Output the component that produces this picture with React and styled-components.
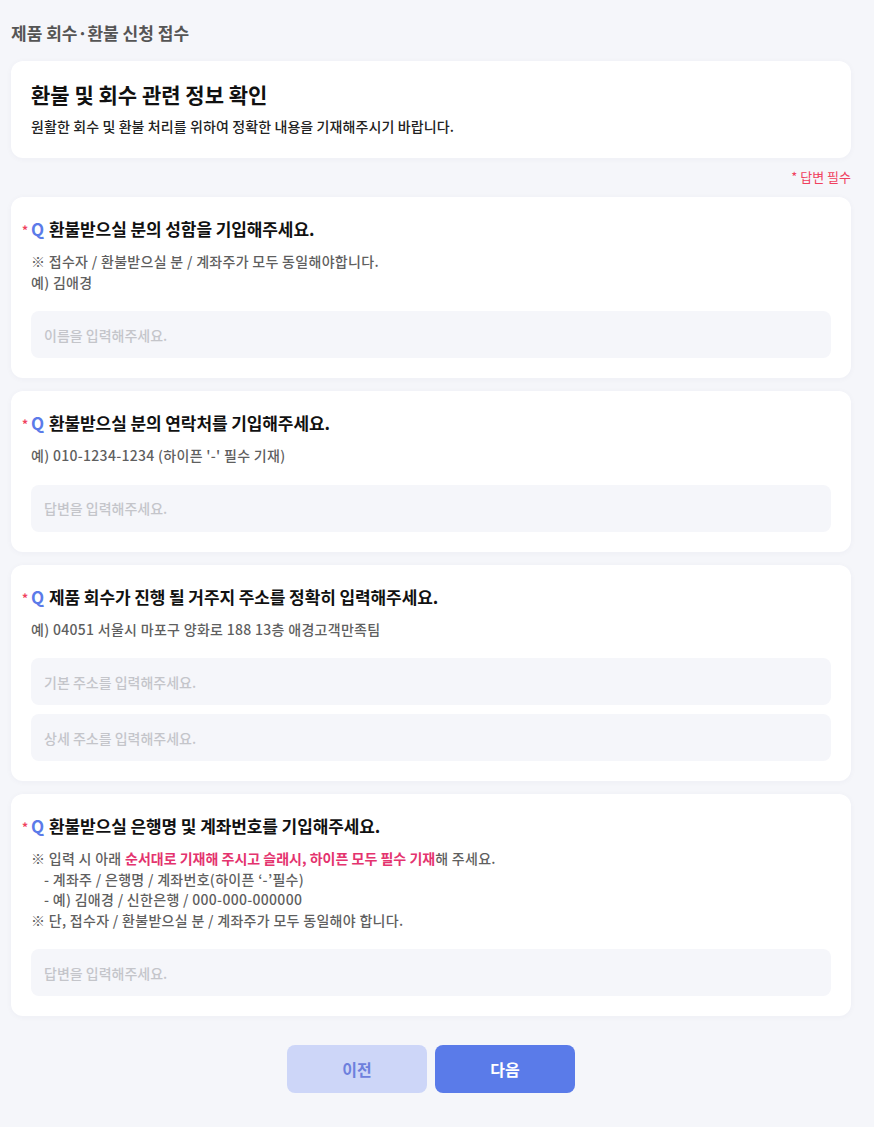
import React from "react";
import styled, { createGlobalStyle } from "styled-components";

const GlobalStyle = createGlobalStyle`
  * { box-sizing: border-box; }
  body {
    margin: 0;
    background: #f5f6fa;
    font-family: "Noto Sans CJK KR", "Noto Sans", sans-serif;
    color: #222;
  }
`;

const Page = styled.div`
  padding: 20px 23px 34px 11px;
  display: flex;
  flex-direction: column;
`;

const PageTitle = styled.h1`
  margin: 0 0 15px;
  font-size: 17px;
  line-height: 26px;
  font-weight: 700;
  color: #555;
`;

const Card = styled.section`
  background: #fff;
  border-radius: 12px;
  box-shadow: 0 1px 6px rgba(40, 50, 90, 0.04);
  padding: 20px 20px 20px 11px;
  display: flex;
  flex-direction: column;
`;

const IntroCard = styled(Card)`
  padding: 18px 20px 21px 20px;
`;

const IntroTitle = styled.h2`
  margin: 0 0 6px;
  font-size: 21px;
  line-height: 30px;
  font-weight: 700;
  color: #111;
`;

const IntroText = styled.p`
  margin: 0;
  font-size: 14px;
  line-height: 22px;
  font-weight: 500;
  color: #222;
  letter-spacing: 0.1px;
`;

const Required = styled.div`
  align-self: flex-end;
  margin: 9px 0 10px;
  font-size: 13px;
  line-height: 20px;
  color: #f0415e;
`;

const List = styled.div`
  display: flex;
  flex-direction: column;
  gap: 13px;
`;

const QTitle = styled.h3`
  margin: 0;
  display: flex;
  align-items: center;
  font-size: 17px;
  line-height: 22px;
  font-weight: 700;
  color: #111;
  letter-spacing: -0.1px;
`;

const Star = styled.span`
  color: #f0415e;
  font-size: 12px;
  width: 9px;
  margin-top: 2px;
`;

const Q = styled.span`
  color: #5b7be9;
  margin-right: 5px;
`;

const Desc = styled.div`
  margin: 10px 0 0 9px;
  font-size: 14px;
  line-height: 20.5px;
  font-weight: 500;
  color: #5f5f5f;
  letter-spacing: 0.3px;
`;

const Line = styled.div`
  padding-left: ${(p) => (p.$indent ? "13px" : "0")};
`;

const Mark = styled.span`
  color: #e4336e;
  font-weight: 700;
  letter-spacing: 0;
`;

const Inputs = styled.div`
  margin: 19px 0 0 9px;
  display: flex;
  flex-direction: column;
  gap: 9px;
`;

const Field = styled.input`
  height: 47px;
  width: 100%;
  border: none;
  outline: none;
  border-radius: 8px;
  background: #f5f6fa;
  padding: 0 13px;
  font-family: inherit;
  font-size: 14px;
  font-weight: 500;
  color: #222;
  &::placeholder {
    color: #c4c5ca;
  }
`;

const Buttons = styled.div`
  margin-top: 29px;
  display: flex;
  justify-content: center;
  gap: 8px;
`;

const Button = styled.button`
  width: 140px;
  height: 48px;
  border: none;
  border-radius: 8px;
  font-family: inherit;
  font-size: 16px;
  font-weight: 700;
  background: ${(p) => (p.$primary ? "#5a7be9" : "#cdd6f8")};
  color: ${(p) => (p.$primary ? "#fff" : "#6d80dd")};
  cursor: pointer;
`;

function Question({ title, children, fields }) {
  return (
    <Card>
      <QTitle>
        <Star>*</Star>
        <Q>Q</Q>
        {title}
      </QTitle>
      <Desc>{children}</Desc>
      <Inputs>
        {fields.map((f) => (
          <Field key={f} placeholder={f} />
        ))}
      </Inputs>
    </Card>
  );
}

export default function App() {
  return (
    <>
      <GlobalStyle />
      <Page>
        <PageTitle>제품 회수·환불 신청 접수</PageTitle>
        <IntroCard>
          <IntroTitle>환불 및 회수 관련 정보 확인</IntroTitle>
          <IntroText>원활한 회수 및 환불 처리를 위하여 정확한 내용을 기재해주시기 바랍니다.</IntroText>
        </IntroCard>
        <Required>* 답변 필수</Required>
        <List>
          <Question title="환불받으실 분의 성함을 기입해주세요." fields={["이름을 입력해주세요."]}>
            <Line>※ 접수자 / 환불받으실 분 / 계좌주가 모두 동일해야합니다.</Line>
            <Line>예) 김애경</Line>
          </Question>
          <Question title="환불받으실 분의 연락처를 기입해주세요." fields={["답변을 입력해주세요."]}>
            <Line>예) 010-1234-1234 (하이픈 '-' 필수 기재)</Line>
          </Question>
          <Question
            title="제품 회수가 진행 될 거주지 주소를 정확히 입력해주세요."
            fields={["기본 주소를 입력해주세요.", "상세 주소를 입력해주세요."]}
          >
            <Line>예) 04051 서울시 마포구 양화로 188 13층 애경고객만족팀</Line>
          </Question>
          <Question title="환불받으실 은행명 및 계좌번호를 기입해주세요." fields={["답변을 입력해주세요."]}>
            <Line>
              ※ 입력 시 아래 <Mark>순서대로 기재해 주시고 슬래시, 하이픈 모두 필수 기재</Mark>해 주세요.
            </Line>
            <Line $indent>- 계좌주 / 은행명 / 계좌번호(하이픈 ‘-’필수)</Line>
            <Line $indent>- 예) 김애경 / 신한은행 / 000-000-000000</Line>
            <Line>※ 단, 접수자 / 환불받으실 분 / 계좌주가 모두 동일해야 합니다.</Line>
          </Question>
        </List>
        <Buttons>
          <Button>이전</Button>
          <Button $primary>다음</Button>
        </Buttons>
      </Page>
    </>
  );
}
